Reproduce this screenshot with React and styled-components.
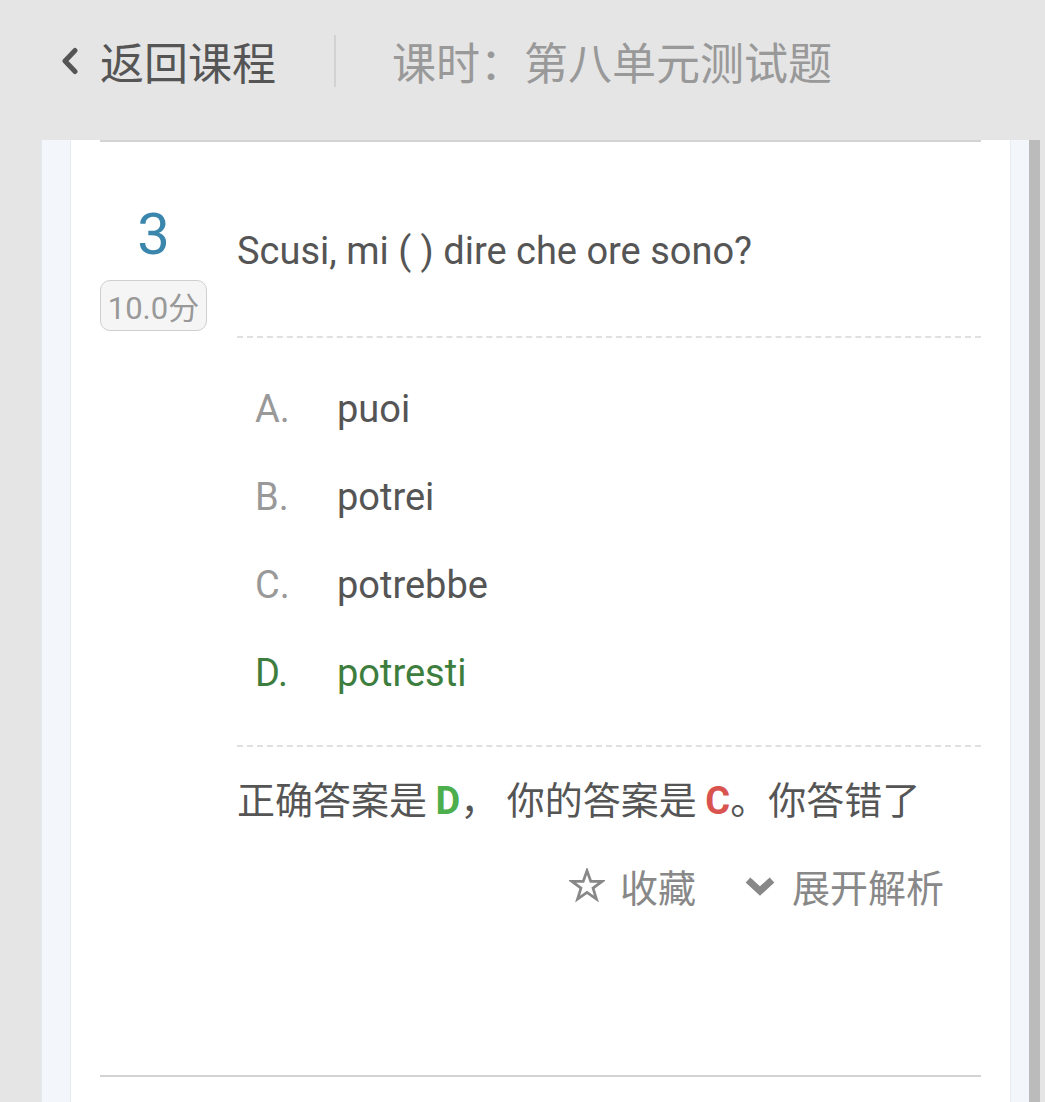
import React from "react";
import styled, { createGlobalStyle } from "styled-components";

const GlobalStyle = createGlobalStyle`
  html, body {
    margin: 0;
    padding: 0;
    background: #e5e5e5;
  }
  body {
    font-family: Roboto, "Noto Sans CJK SC", sans-serif;
    overflow: hidden;
  }
`;

const options = [
  { key: "A", text: "puoi" },
  { key: "B", text: "potrei" },
  { key: "C", text: "potrebbe" },
  { key: "D", text: "potresti", correct: true },
];

const App = () => {
  return (
    <Page>
      <GlobalStyle />
      <TopBar>
        <BackLink>
          <svg width="20" height="28" viewBox="0 0 20 28">
            <polyline
              points="15,3.5 5,14 15,24.5"
              fill="none"
              stroke="#555"
              strokeWidth="5"
              strokeLinecap="round"
              strokeLinejoin="round"
            />
          </svg>
          <span>返回课程</span>
        </BackLink>
        <Divider />
        <Title>课时：第八单元测试题</Title>
      </TopBar>

      <Body>
        <Frame>
          <Sheet>
            <Question>
              <NumberCol>
                <QNumber>3</QNumber>
                <Score>10.0分</Score>
              </NumberCol>
              <Content>
                <Stem>Scusi, mi ( ) dire che ore sono?</Stem>
                <OptionList>
                  {options.map((o) => (
                    <Option key={o.key} $correct={o.correct}>
                      <Label $correct={o.correct}>{o.key}.</Label>
                      <span>{o.text}</span>
                    </Option>
                  ))}
                </OptionList>
                <Result>
                  正确答案是 <Right>D</Right>， 你的答案是 <Wrong>C</Wrong>。你答错了
                </Result>
                <Actions>
                  <Action>
                    <svg width="36" height="35" viewBox="0 0 34 33">
                      <polygon
                        points="17,2.5 20.6,12.6 31.3,12.6 22.7,19 25.9,29.3 17,23 8.1,29.3 11.3,19 2.7,12.6 13.4,12.6"
                        fill="none"
                        stroke="#888"
                        strokeWidth="2.6"
                        strokeLinejoin="miter"
                      />
                    </svg>
                    <span>收藏</span>
                  </Action>
                  <Action>
                    <svg width="34" height="24" viewBox="0 0 34 24">
                      <polyline
                        points="5,6 17,17 29,6"
                        fill="none"
                        stroke="#888"
                        strokeWidth="7"
                        strokeLinejoin="miter"
                      />
                    </svg>
                    <span>展开解析</span>
                  </Action>
                </Actions>
              </Content>
            </Question>
            <Question />
          </Sheet>
        </Frame>
        <ScrollTrack />
      </Body>
    </Page>
  );
};

export default App;

const Page = styled.div`
  height: 1102px;
  display: flex;
  flex-direction: column;
  background: #e5e5e5;
`;

const TopBar = styled.header`
  height: 122px;
  padding: 0 0 18px 60px;
  display: flex;
  align-items: center;
  flex-shrink: 0;
`;

const BackLink = styled.div`
  display: flex;
  align-items: center;
  gap: 20px;
  color: #555;
  font-size: 44px;
  font-family: "Noto Sans CJK SC", sans-serif;
  line-height: 1;
`;

const Divider = styled.div`
  width: 2px;
  height: 52px;
  background: #d2d2d2;
  margin: 0 56px 0 58px;
`;

const Title = styled.div`
  color: #999;
  font-size: 44px;
  font-family: "Noto Sans CJK SC", sans-serif;
  line-height: 1;
`;

const Body = styled.div`
  flex: 1;
  display: flex;
  padding-left: 41px;
  min-height: 0;
`;

const Frame = styled.div`
  width: 988px;
  box-sizing: border-box;
  background: #f3f7fb;
  border-left: 1px solid #e3e9ef;
  padding: 0 18px 0 28px;
`;

const Sheet = styled.div`
  height: 100%;
  background: #fff;
  border-left: 1px solid #e6ecf2;
  border-right: 1px solid #e6ecf2;
  padding: 0 29px 0 29px;
  overflow: hidden;
`;

const ScrollTrack = styled.div`
  width: 11px;
  background: #bbbbbb;
`;

const Question = styled.div`
  border-top: 2px solid #d3d3d3;
  padding: 63px 0 161px;
  display: grid;
  grid-template-columns: 107px 1fr;
  column-gap: 30px;
`;

const NumberCol = styled.div`
  display: flex;
  flex-direction: column;
  align-items: center;
`;

const QNumber = styled.div`
  font-size: 58px;
  line-height: 1;
  color: #3b86ad;
  font-family: Roboto, sans-serif;
`;

const Score = styled.div`
  margin-top: 17px;
  box-sizing: border-box;
  width: 107px;
  height: 51px;
  display: flex;
  align-items: center;
  justify-content: center;
  border: 1px solid #cfcfcf;
  border-radius: 10px;
  background: #f5f5f5;
  color: #999;
  font-size: 31px;
  font-family: Roboto, "Noto Sans CJK SC", sans-serif;
`;

const Content = styled.div`
  display: flex;
  flex-direction: column;
`;

const Stem = styled.div`
  padding: 18px 0 56px;
  font-size: 38px;
  line-height: 57px;
  color: #555;
  border-bottom: 2px dashed #e0e0e0;
`;

const OptionList = styled.div`
  padding: 27px 0 28px 18px;
  border-bottom: 2px dashed #e0e0e0;
`;

const Option = styled.div`
  height: 88px;
  display: flex;
  align-items: center;
  font-size: 38px;
  color: ${(p) => (p.$correct ? "#3d7d3d" : "#555")};
`;

const Label = styled.span`
  width: 82px;
  color: ${(p) => (p.$correct ? "#3d7d3d" : "#999")};
`;

const Result = styled.div`
  padding-top: 22px;
  font-size: 38px;
  line-height: 57px;
  color: #555;
  font-family: "Noto Sans CJK SC", Roboto, sans-serif;
`;

const Right = styled.b`
  color: #4cae4c;
  font-family: Roboto, sans-serif;
  font-weight: 700;
`;

const Wrong = styled.b`
  color: #d9534f;
  font-family: Roboto, sans-serif;
  font-weight: 700;
`;

const Actions = styled.div`
  margin-top: 27px;
  padding-right: 37px;
  display: flex;
  justify-content: flex-end;
  gap: 47px;
`;

const Action = styled.div`
  display: flex;
  align-items: center;
  gap: 15px;
  color: #888;
  font-size: 38px;
  line-height: 57px;
  font-family: "Noto Sans CJK SC", sans-serif;
`;
